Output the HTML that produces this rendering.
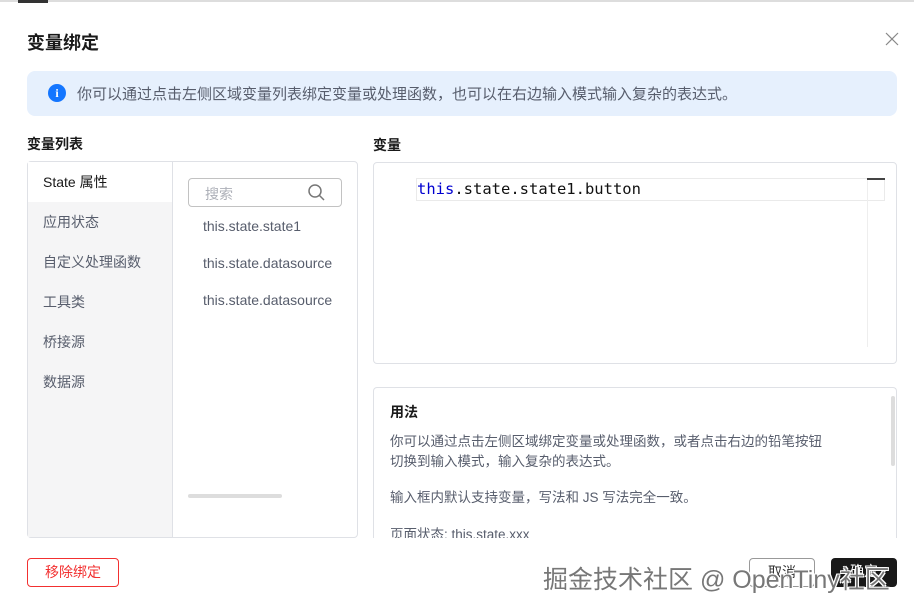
<!DOCTYPE html>
<html><head><meta charset="utf-8"><style>
*{box-sizing:border-box;margin:0;padding:0}
body{width:914px;height:609px;overflow:hidden;background:#fff;font-family:"Liberation Sans","Noto Sans CJK SC",sans-serif;color:#252b3a;position:relative}
.abs{position:absolute}
.topline{left:0;top:0;width:914px;height:2px;background:#ddd}
.title{left:27px;top:29px;font-size:18px;font-weight:bold;color:#191919}
.alert{left:27px;top:71px;width:870px;height:45px;background:#e6f0fd;border-radius:8px}
.alert .ic{position:absolute;left:21px;top:13px;width:18px;height:18px;border-radius:50%;background:#1476ff;color:#fff;font-size:12px;font-weight:bold;text-align:center;line-height:18px;font-family:"Liberation Serif",serif}
.alert .t{position:absolute;left:50px;top:12px;font-size:15px;color:#575d6c}
.h{font-size:14px;font-weight:bold;color:#191919}
.left{left:27px;top:161px;width:331px;height:377px;border:1px solid #dfe1e6;border-radius:4px}
.cats{position:absolute;left:0;top:0;width:145px;height:375px;background:#f5f5f6;border-right:1px solid #dfe1e6}
.cats div{height:40px;line-height:40px;padding-left:15px;font-size:14px;color:#575d6c}
.cats div.on{background:#fff;color:#191919}
.search{left:188px;top:178px;width:154px;height:29px;border:1px solid #c2c2c2;border-radius:4px;font-size:14px;color:#adb0b8;padding:5px 16px}
.item{left:203px;font-size:14px;color:#575d6c}
.right1{left:373px;top:162px;width:524px;height:202px;border:1px solid #dfe1e6;border-radius:4px}
.code{left:416px;top:178px;width:469px;height:23px;border:1px solid #eaeaea;font-family:"DejaVu Sans Mono","Liberation Mono",monospace;font-size:15.5px;line-height:21px;color:#111}
.usage{left:373px;top:387px;width:524px;height:151px;border:1px solid #dfe1e6;border-bottom:none;border-radius:4px 4px 0 0;overflow:hidden}
.usage p{font-size:13.5px;color:#575d6c;line-height:20px}
.btn{height:29px;border-radius:4px;font-size:14px;text-align:center;line-height:27px}
</style></head><body>
<div class="abs topline"></div>
<div class="abs" style="left:18px;top:0;width:30px;height:3px;background:#333"></div>
<div class="abs title">变量绑定</div>
<svg class="abs" style="left:884px;top:31px" width="16" height="16" viewBox="0 0 16 16"><path d="M2 2L14 14M14 2L2 14" stroke="#888" stroke-width="1.2"/></svg>
<div class="abs alert"><div class="ic">i</div><div class="t">你可以通过点击左侧区域变量列表绑定变量或处理函数，也可以在右边输入模式输入复杂的表达式。</div></div>
<div class="abs h" style="left:27px;top:134px">变量列表</div>
<div class="abs h" style="left:373px;top:135px">变量</div>
<div class="abs left"><div class="cats">
<div class="on">State 属性</div><div>应用状态</div><div>自定义处理函数</div><div>工具类</div><div>桥接源</div><div>数据源</div></div></div>
<div class="abs search">搜索</div>
<svg class="abs" style="left:307px;top:183px" width="20" height="20" viewBox="0 0 20 20"><circle cx="8" cy="8" r="6" fill="none" stroke="#777" stroke-width="1.5"/><line x1="12.5" y1="12.5" x2="17" y2="17" stroke="#777" stroke-width="1.5"/></svg>
<div class="abs item" style="top:218px">this.state.state1</div>
<div class="abs item" style="top:255px">this.state.datasource</div>
<div class="abs item" style="top:292px">this.state.datasource</div>
<div class="abs" style="left:188px;top:494px;width:94px;height:4px;background:#ddd;border-radius:2px"></div>
<div class="abs right1"></div>
<div class="abs code"><span style="color:#0000d0">this</span>.state.state1.button</div>
<div class="abs" style="left:867px;top:178px;width:18px;height:2px;background:#444"></div>
<div class="abs" style="left:867px;top:180px;width:1px;height:167px;background:#eee"></div>
<div class="abs usage">
<div class="h" style="position:absolute;left:16px;top:14px">用法</div>
<p style="position:absolute;left:16px;top:44px;width:490px">你可以通过点击左侧区域绑定变量或处理函数，或者点击右边的铅笔按钮<br>切换到输入模式，输入复杂的表达式。</p>
<p style="position:absolute;left:16px;top:100px">输入框内默认支持变量，写法和 JS 写法完全一致。</p>
<p style="position:absolute;left:16px;top:137px">页面状态: this.state.xxx</p>
<div style="position:absolute;left:517px;top:8px;width:4px;height:70px;background:#ddd;border-radius:2px"></div>
</div>
<div class="abs btn" style="left:27px;top:558px;width:92px;border:1px solid #f23030;color:#f23030">移除绑定</div>
<div class="abs btn" style="left:749px;top:558px;width:66px;border:1px solid #999;color:#333">取消</div>
<div class="abs btn" style="left:831px;top:558px;width:66px;background:#191919;color:#fff">确定</div>
<div class="abs" style="left:543px;top:560px;font-size:25px;color:#777;text-shadow:1px 1px 0 #fff,-1px -1px 0 #fff,1px -1px 0 #fff,-1px 1px 0 #fff">掘金技术社区 @ OpenTiny社区</div>
</body></html>
